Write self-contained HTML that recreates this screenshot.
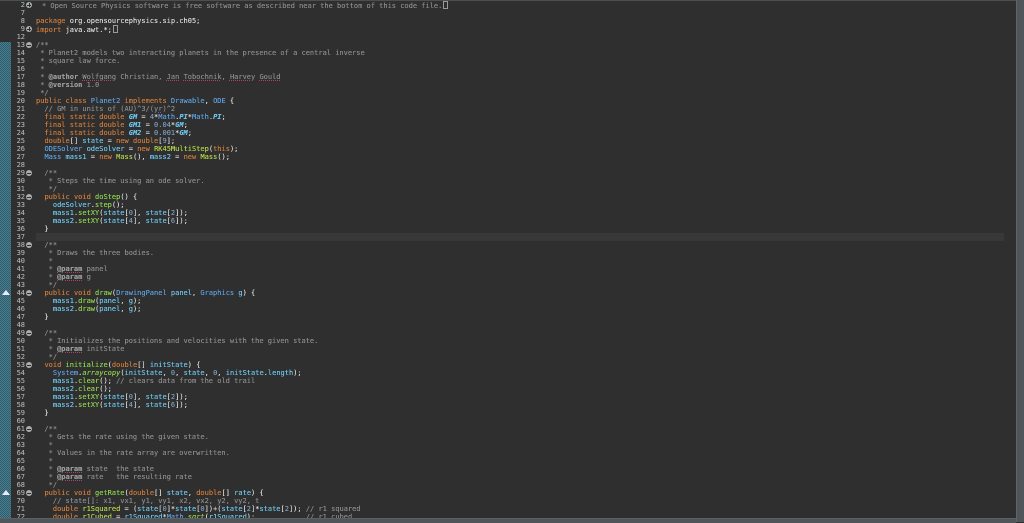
<!DOCTYPE html>
<html><head><meta charset="utf-8">
<style>
html,body{margin:0;padding:0;background:#2f2f2f;width:1024px;height:522px;overflow:hidden;}
#ed{position:absolute;left:0;top:1px;width:1016px;height:517px;background:#2f2f2f;overflow:hidden;}
#top{position:absolute;left:0;top:0;width:1024px;height:1px;background:#4a4f52;}
#right{position:absolute;left:1016px;top:0;width:8px;height:522px;background:#4f5558;border-left:1px solid #5e6467;}
#bot{position:absolute;left:0;top:518px;width:1016px;height:4px;background:#4f5558;border-top:1px solid #5a6063;}
#hatch{position:absolute;left:0;top:41px;width:11px;height:480px;
background-color:#2f5a6a;
background-image:linear-gradient(45deg,#4a7f92 25%,transparent 25%,transparent 75%,#4a7f92 75%),linear-gradient(45deg,#4a7f92 25%,transparent 25%,transparent 75%,#4a7f92 75%);
background-size:2px 2px;background-position:0 0,1px 1px;}
.row{position:absolute;left:0;height:8px;width:1016px;font:7px/8px "DejaVu Sans Mono","Liberation Mono",monospace;white-space:pre;color:#dadada;text-shadow:0 0 0.3px currentColor;}
.ln{position:absolute;left:0;width:25px;text-align:right;color:#a8a8a8;}
.cd{position:absolute;left:36px;}
.fold{position:absolute;left:26px;top:1px;width:6px;height:6px;border-radius:50%;background:#a8adb0;}
.fold::after{content:"";position:absolute;left:1px;top:2.5px;width:4px;height:1px;background:#2f2f2f;}
.fold.p::before{content:"";position:absolute;left:2.5px;top:1px;width:1px;height:4px;background:#2f2f2f;}
.tri{position:absolute;left:2px;top:1px;width:0;height:0;border-left:4px solid transparent;border-right:4px solid transparent;border-bottom:5px solid #e8ecff;}
.hl{background:#383838;}
.k{color:#cc7a3a}
.c{color:#8a8a8a}
.cb{color:#9a9a9a;font-weight:bold}
.u{text-decoration:underline dotted #b04070;text-decoration-thickness:1px;text-underline-offset:1px}
.f{color:#6cc4ea;font-style:italic;font-weight:bold}
.v{color:#6cc4ea}
.m{color:#8cd44a}
.mi{color:#8cd44a;font-style:italic}
.t{color:#5c9ede}
.n{color:#7d9bb8}
.y{color:#b4d44a}
.box{display:inline-block;width:3px;height:6px;border:1px solid #999;vertical-align:-1px;margin-left:1px;}
</style></head><body>
<div id="ed">
<div id="hatch"></div>
<div class="row" style="top:0px"><span class="ln">2</span><span class="fold p"></span><span class="cd c" style="left:42px">* Open Source Physics software is free software as described near the bottom of this code file.<span class="box"></span></span></div>
<div class="row" style="top:8px"><span class="ln">7</span></div>
<div class="row" style="top:16px"><span class="ln">8</span><span class="cd"><span class="k">package</span> org.opensourcephysics.sip.ch05;</span></div>
<div class="row" style="top:24px"><span class="ln">9</span><span class="fold p"></span><span class="cd"><span class="k">import</span> java.awt.*;<span class="box"></span></span></div>
<div class="row" style="top:32px"><span class="ln">12</span></div>
<div class="row" style="top:40px"><span class="ln">13</span><span class="fold"></span><span class="cd c">/**</span></div>
<div class="row" style="top:48px"><span class="ln">14</span><span class="cd c"> * Planet2 models two interacting planets in the presence of a central inverse</span></div>
<div class="row" style="top:56px"><span class="ln">15</span><span class="cd c"> * square law force.</span></div>
<div class="row" style="top:64px"><span class="ln">16</span><span class="cd c"> *</span></div>
<div class="row" style="top:72px"><span class="ln">17</span><span class="cd c"> * <span class="cb">@author</span> <span class="u">Wolfgang</span> Christian, <span class="u">Jan</span> <span class="u">Tobochnik</span>, <span class="u">Harvey</span> <span class="u">Gould</span></span></div>
<div class="row" style="top:80px"><span class="ln">18</span><span class="cd c"> * <span class="cb">@version</span> 1.0</span></div>
<div class="row" style="top:88px"><span class="ln">19</span><span class="cd c"> */</span></div>
<div class="row" style="top:96px"><span class="ln">20</span><span class="cd"><span class="k">public class</span> <span class="t">Planet2</span> <span class="k">implements</span> <span class="t">Drawable</span>, <span class="t">ODE</span> {</span></div>
<div class="row" style="top:104px"><span class="ln">21</span><span class="cd c">  // GM in units of (AU)^3/(<span class="u">yr</span>)^2</span></div>
<div class="row" style="top:112px"><span class="ln">22</span><span class="cd">  <span class="k">final static double</span> <span class="f">GM</span> = <span class="n">4</span>*<span class="t">Math</span>.<span class="f">PI</span>*<span class="t">Math</span>.<span class="f">PI</span>;</span></div>
<div class="row" style="top:120px"><span class="ln">23</span><span class="cd">  <span class="k">final static double</span> <span class="f">GM1</span> = <span class="n">0.04</span>*<span class="f">GM</span>;</span></div>
<div class="row" style="top:128px"><span class="ln">24</span><span class="cd">  <span class="k">final static double</span> <span class="f">GM2</span> = <span class="n">0.001</span>*<span class="f">GM</span>;</span></div>
<div class="row" style="top:136px"><span class="ln">25</span><span class="cd">  <span class="k">double</span>[] <span class="v">state</span> = <span class="k">new double</span>[<span class="n">9</span>];</span></div>
<div class="row" style="top:144px"><span class="ln">26</span><span class="cd">  <span class="t">ODESolver</span> <span class="v">odeSolver</span> = <span class="k">new</span> <span class="y">RK45MultiStep</span>(<span class="k">this</span>);</span></div>
<div class="row" style="top:152px"><span class="ln">27</span><span class="cd">  <span class="t">Mass</span> <span class="v">mass1</span> = <span class="k">new</span> <span class="y">Mass</span>(), <span class="v">mass2</span> = <span class="k">new</span> <span class="y">Mass</span>();</span></div>
<div class="row" style="top:160px"><span class="ln">28</span></div>
<div class="row" style="top:168px"><span class="ln">29</span><span class="fold"></span><span class="cd c">  /**</span></div>
<div class="row" style="top:176px"><span class="ln">30</span><span class="cd c">   * Steps the time using an ode solver.</span></div>
<div class="row" style="top:184px"><span class="ln">31</span><span class="cd c">   */</span></div>
<div class="row" style="top:192px"><span class="ln">32</span><span class="fold"></span><span class="cd">  <span class="k">public void</span> <span class="m">doStep</span>() {</span></div>
<div class="row" style="top:200px"><span class="ln">33</span><span class="cd">    <span class="v">odeSolver</span>.<span class="m">step</span>();</span></div>
<div class="row" style="top:208px"><span class="ln">34</span><span class="cd">    <span class="v">mass1</span>.<span class="m">setXY</span>(<span class="v">state</span>[<span class="n">0</span>], <span class="v">state</span>[<span class="n">2</span>]);</span></div>
<div class="row" style="top:216px"><span class="ln">35</span><span class="cd">    <span class="v">mass2</span>.<span class="m">setXY</span>(<span class="v">state</span>[<span class="n">4</span>], <span class="v">state</span>[<span class="n">6</span>]);</span></div>
<div class="row" style="top:224px"><span class="ln">36</span><span class="cd">  }</span></div>
<div class="row" style="top:232px"><span class="ln">37</span><span class="cd hl" style="width:968px;height:8px"></span></div>
<div class="row" style="top:240px"><span class="ln">38</span><span class="fold"></span><span class="cd c">  /**</span></div>
<div class="row" style="top:248px"><span class="ln">39</span><span class="cd c">   * Draws the three bodies.</span></div>
<div class="row" style="top:256px"><span class="ln">40</span><span class="cd c">   *</span></div>
<div class="row" style="top:264px"><span class="ln">41</span><span class="cd c">   * <span class="cb u">@param</span> panel</span></div>
<div class="row" style="top:272px"><span class="ln">42</span><span class="cd c">   * <span class="cb u">@param</span> g</span></div>
<div class="row" style="top:280px"><span class="ln">43</span><span class="cd c">   */</span></div>
<div class="row" style="top:288px"><span class="tri"></span><span class="ln">44</span><span class="fold"></span><span class="cd">  <span class="k">public void</span> <span class="m">draw</span>(<span class="t">DrawingPanel</span> <span class="v">panel</span>, <span class="t">Graphics</span> <span class="v">g</span>) {</span></div>
<div class="row" style="top:296px"><span class="ln">45</span><span class="cd">    <span class="v">mass1</span>.<span class="m">draw</span>(<span class="v">panel</span>, <span class="v">g</span>);</span></div>
<div class="row" style="top:304px"><span class="ln">46</span><span class="cd">    <span class="v">mass2</span>.<span class="m">draw</span>(<span class="v">panel</span>, <span class="v">g</span>);</span></div>
<div class="row" style="top:312px"><span class="ln">47</span><span class="cd">  }</span></div>
<div class="row" style="top:320px"><span class="ln">48</span></div>
<div class="row" style="top:328px"><span class="ln">49</span><span class="fold"></span><span class="cd c">  /**</span></div>
<div class="row" style="top:336px"><span class="ln">50</span><span class="cd c">   * Initializes the positions and velocities with the given state.</span></div>
<div class="row" style="top:344px"><span class="ln">51</span><span class="cd c">   * <span class="cb u">@param</span> initState</span></div>
<div class="row" style="top:352px"><span class="ln">52</span><span class="cd c">   */</span></div>
<div class="row" style="top:360px"><span class="ln">53</span><span class="fold"></span><span class="cd">  <span class="k">void</span> <span class="m">initialize</span>(<span class="k">double</span>[] <span class="v">initState</span>) {</span></div>
<div class="row" style="top:368px"><span class="ln">54</span><span class="cd">    <span class="t">System</span>.<span class="mi">arraycopy</span>(<span class="v">initState</span>, <span class="n">0</span>, <span class="v">state</span>, <span class="n">0</span>, <span class="v">initState</span>.<span class="v">length</span>);</span></div>
<div class="row" style="top:376px"><span class="ln">55</span><span class="cd">    <span class="v">mass1</span>.<span class="m">clear</span>(); <span class="c">// clears data from the old trail</span></span></div>
<div class="row" style="top:384px"><span class="ln">56</span><span class="cd">    <span class="v">mass2</span>.<span class="m">clear</span>();</span></div>
<div class="row" style="top:392px"><span class="ln">57</span><span class="cd">    <span class="v">mass1</span>.<span class="m">setXY</span>(<span class="v">state</span>[<span class="n">0</span>], <span class="v">state</span>[<span class="n">2</span>]);</span></div>
<div class="row" style="top:400px"><span class="ln">58</span><span class="cd">    <span class="v">mass2</span>.<span class="m">setXY</span>(<span class="v">state</span>[<span class="n">4</span>], <span class="v">state</span>[<span class="n">6</span>]);</span></div>
<div class="row" style="top:408px"><span class="ln">59</span><span class="cd">  }</span></div>
<div class="row" style="top:416px"><span class="ln">60</span></div>
<div class="row" style="top:424px"><span class="ln">61</span><span class="fold"></span><span class="cd c">  /**</span></div>
<div class="row" style="top:432px"><span class="ln">62</span><span class="cd c">   * Gets the rate using the given state.</span></div>
<div class="row" style="top:440px"><span class="ln">63</span><span class="cd c">   *</span></div>
<div class="row" style="top:448px"><span class="ln">64</span><span class="cd c">   * Values in the rate array are overwritten.</span></div>
<div class="row" style="top:456px"><span class="ln">65</span><span class="cd c">   *</span></div>
<div class="row" style="top:464px"><span class="ln">66</span><span class="cd c">   * <span class="cb u">@param</span> state  the state</span></div>
<div class="row" style="top:472px"><span class="ln">67</span><span class="cd c">   * <span class="cb u">@param</span> rate   the resulting rate</span></div>
<div class="row" style="top:480px"><span class="ln">68</span><span class="cd c">   */</span></div>
<div class="row" style="top:488px"><span class="tri"></span><span class="ln">69</span><span class="fold"></span><span class="cd">  <span class="k">public void</span> <span class="m">getRate</span>(<span class="k">double</span>[] <span class="v">state</span>, <span class="k">double</span>[] <span class="v">rate</span>) {</span></div>
<div class="row" style="top:496px"><span class="ln">70</span><span class="cd c">    // state[]: x1, vx1, y1, vy1, x2, vx2, y2, vy2, t</span></div>
<div class="row" style="top:504px"><span class="ln">71</span><span class="cd">    <span class="k">double</span> <span class="y">r1Squared</span> = (<span class="v">state</span>[<span class="n">0</span>]*<span class="v">state</span>[<span class="n">0</span>])+(<span class="v">state</span>[<span class="n">2</span>]*<span class="v">state</span>[<span class="n">2</span>]); <span class="c">// r1 squared</span></span></div>
<div class="row" style="top:512px"><span class="ln">72</span><span class="cd">    <span class="k">double</span> <span class="y">r1Cubed</span> = <span class="v">r1Squared</span>*<span class="t">Math</span>.<span class="mi">sqrt</span>(<span class="v">r1Squared</span>);            <span class="c">// r1 cubed</span></span></div>
</div>
<div id="top"></div>
<div id="right"></div>
<div id="bot"></div>
</body></html>
